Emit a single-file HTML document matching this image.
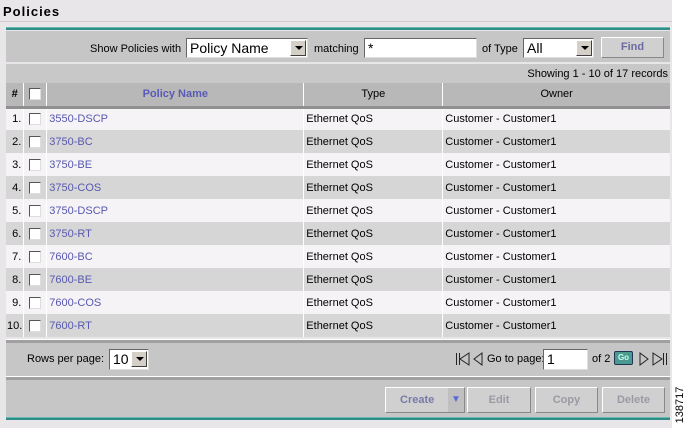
<!DOCTYPE html>
<html><head><style>
*{margin:0;padding:0;box-sizing:border-box}
body{width:688px;height:428px;background:#fff;font-family:"Liberation Sans",sans-serif;font-size:11px;color:#000;position:relative;overflow:hidden}
.bg{position:absolute;left:0;top:0;width:672px;height:428px;background:#e9e6e9}
.title{position:absolute;left:3px;top:4px;font-weight:bold;font-size:13px;letter-spacing:1px}
.tl{position:absolute;left:0;top:21px;width:672px;height:1px;background:#d8c8d0}
.teal{position:absolute;left:6px;width:664px;height:3px;background:#2e8e88;border-top:1px solid #6ab8b0}
.p{position:absolute;left:6px;width:664px;background:#c6c6c6}
.sel{position:absolute;background:#fff;border:1px solid #666;border-right-color:#ddd;border-bottom-color:#ddd;font-size:14px;padding-left:3px;line-height:18px}
.arr{position:absolute;right:1px;top:1px;width:16px;height:16px;background:#d4d0c8;border:1px solid #fff;border-right-color:#404040;border-bottom-color:#404040}
.arr:after{content:"";position:absolute;left:4px;top:5px;border:4px solid transparent;border-top:4px solid #000;border-bottom:0}
.btn{position:absolute;height:26px;background:#d0d0d0;border:1px solid #fff;border-right-color:#888;border-bottom-color:#888;color:#9a9aa4;font-weight:bold;font-size:11px;text-align:center;line-height:24px}
table{position:absolute;left:6px;top:83px;width:664px;border-collapse:collapse}
td{height:23px;border-left:1px solid #fff;padding:0 2px;white-space:nowrap}
th{height:24px;background:#b8b8b8;border-left:1px solid #fff;border-bottom:3px solid #909090;font-weight:normal}
tr.o td{background:#f5f3f5}tr.e td{background:#d6d6d6}
td:nth-child(2){text-align:center}
.cb{display:inline-block;width:12px;height:12px;background:#fff;border:1px solid #555;border-right-color:#ddd;border-bottom-color:#ddd;vertical-align:middle}
a{color:#5858b0;text-decoration:none}
</style></head><body>
<div class="bg"></div>
<div class="title">Policies</div>
<div class="tl"></div>
<div class="teal" style="top:27px"></div>
<div class="p" style="top:31px;height:31px"></div>
<div style="position:absolute;left:90px;top:43px">Show Policies with</div>
<div class="sel" style="left:186px;top:38px;width:122px;height:20px">Policy Name<div class="arr"></div></div>
<div style="position:absolute;left:314px;top:43px">matching</div>
<div class="sel" style="left:364px;top:38px;width:113px;height:20px">*</div>
<div style="position:absolute;left:482px;top:43px">of Type</div>
<div class="sel" style="left:523px;top:38px;width:71px;height:20px">All<div class="arr"></div></div>
<div class="btn" style="left:601px;top:37px;width:63px;height:21px;line-height:19px;color:#6a6aa0">Find</div>
<div class="p" style="top:64px;height:19px;background:#c8c8c8"></div>
<div style="position:absolute;right:20px;top:68px">Showing 1 - 10 of 17 records</div>
<table>
<tr><th style="width:17px;font-weight:bold;border-left:0">#</th><th style="width:23px"><span class="cb"></span></th><th style="width:257px;color:#5a5ab8;font-weight:bold">Policy Name</th><th style="width:139px">Type</th><th>Owner</th></tr>
<tr class="o"><td style="border-left:0;text-align:right">1.</td><td><span class="cb"></span></td><td><a>3550-DSCP</a></td><td>Ethernet QoS</td><td>Customer - Customer1</td></tr>
<tr class="e"><td style="border-left:0;text-align:right">2.</td><td><span class="cb"></span></td><td><a>3750-BC</a></td><td>Ethernet QoS</td><td>Customer - Customer1</td></tr>
<tr class="o"><td style="border-left:0;text-align:right">3.</td><td><span class="cb"></span></td><td><a>3750-BE</a></td><td>Ethernet QoS</td><td>Customer - Customer1</td></tr>
<tr class="e"><td style="border-left:0;text-align:right">4.</td><td><span class="cb"></span></td><td><a>3750-COS</a></td><td>Ethernet QoS</td><td>Customer - Customer1</td></tr>
<tr class="o"><td style="border-left:0;text-align:right">5.</td><td><span class="cb"></span></td><td><a>3750-DSCP</a></td><td>Ethernet QoS</td><td>Customer - Customer1</td></tr>
<tr class="e"><td style="border-left:0;text-align:right">6.</td><td><span class="cb"></span></td><td><a>3750-RT</a></td><td>Ethernet QoS</td><td>Customer - Customer1</td></tr>
<tr class="o"><td style="border-left:0;text-align:right">7.</td><td><span class="cb"></span></td><td><a>7600-BC</a></td><td>Ethernet QoS</td><td>Customer - Customer1</td></tr>
<tr class="e"><td style="border-left:0;text-align:right">8.</td><td><span class="cb"></span></td><td><a>7600-BE</a></td><td>Ethernet QoS</td><td>Customer - Customer1</td></tr>
<tr class="o"><td style="border-left:0;text-align:right">9.</td><td><span class="cb"></span></td><td><a>7600-COS</a></td><td>Ethernet QoS</td><td>Customer - Customer1</td></tr>
<tr class="e"><td style="border-left:0;text-align:right;padding:0 1px">10.</td><td><span class="cb"></span></td><td><a>7600-RT</a></td><td>Ethernet QoS</td><td>Customer - Customer1</td></tr>
</table>
<div class="p" style="top:339px;height:4px;background:#a0a0a0;border-top:1px solid #fff"></div>
<div class="p" style="top:343px;height:33px"></div>
<div style="position:absolute;left:27px;top:353px">Rows per page:</div>
<div class="sel" style="left:109px;top:349px;width:40px;height:21px">10<div class="arr"></div></div>
<svg style="position:absolute;left:455px;top:351px" width="32" height="16" viewBox="0 0 32 16" fill="none" stroke="#222" stroke-width="1"><path d="M1.5 2v12M4.5 2v12M14 2L5 8l9 6z"/><path d="M27 2L19 8l8 6z"/></svg>
<div style="position:absolute;left:487px;top:353px">Go to page:</div>
<div class="sel" style="left:543px;top:349px;width:45px;height:21px">1</div>
<div style="position:absolute;left:592px;top:353px">of 2</div>
<div style="position:absolute;left:614px;top:351px;width:19px;height:14px;background:#4a9a90;border:1px solid #235;border-radius:2px;color:#cfe;font-size:8px;font-weight:bold;text-align:center;line-height:12px">Go</div>
<svg style="position:absolute;left:638px;top:351px" width="30" height="16" viewBox="0 0 30 16" fill="none" stroke="#222" stroke-width="1"><path d="M2 2l8 6-8 6z"/><path d="M15 2l9 6-9 6zM25.5 2v12M28.5 2v12"/></svg>
<div class="p" style="top:376px;height:4px;background:#a0a0a0;border-top:1px solid #fff"></div>
<div class="p" style="top:380px;height:37px"></div>
<div class="btn" style="left:385px;top:387px;width:80px;text-align:left;padding-left:14px;color:#7a7aa8">Create<span style="position:absolute;left:62px;top:0;width:16px;height:24px;background:#c0c0c0;color:#5a6ad8;font-size:10px;text-align:center">▼</span></div>
<div class="btn" style="left:467px;top:387px;width:64px">Edit</div>
<div class="btn" style="left:535px;top:387px;width:63px">Copy</div>
<div class="btn" style="left:602px;top:387px;width:63px">Delete</div>
<div class="teal" style="top:417px"></div>
<div style="position:absolute;left:660px;top:399px;width:40px;transform:rotate(-90deg);font-size:11px;text-align:center">138717</div>
</body></html>
